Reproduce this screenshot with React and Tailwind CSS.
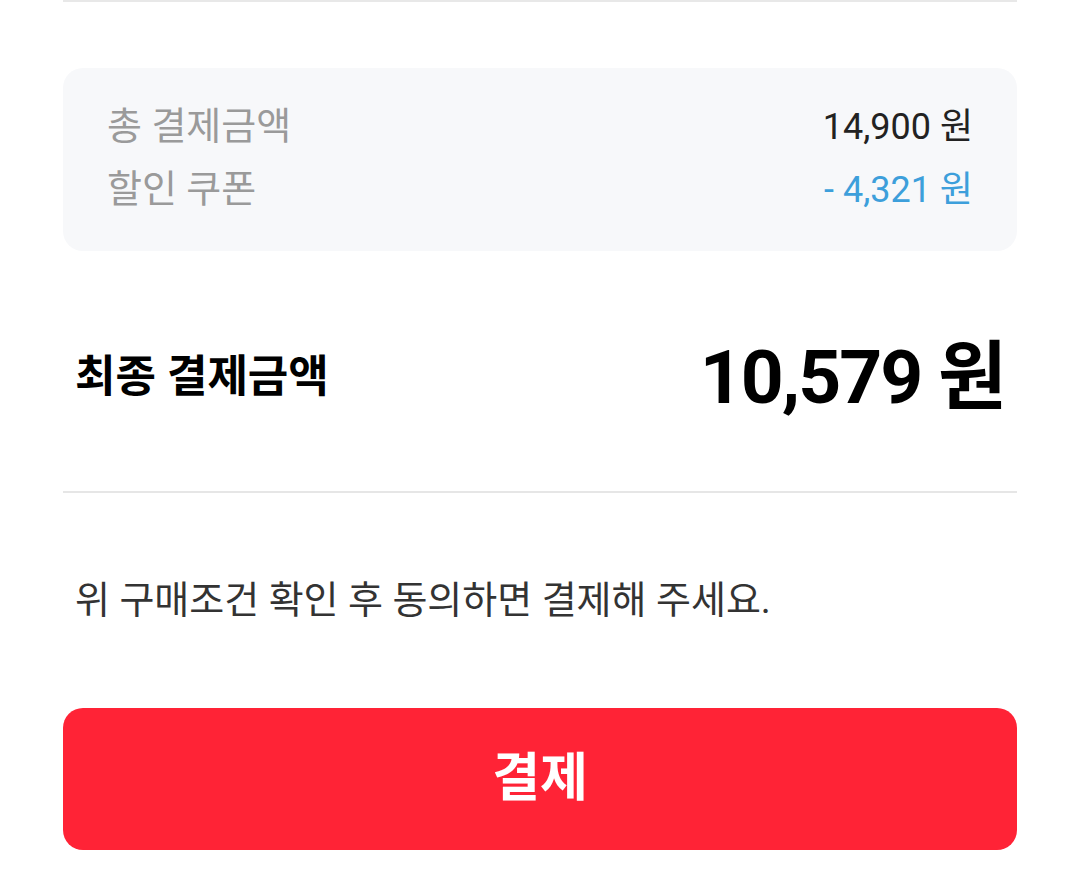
export default function App() {
  const font = { fontFamily: 'Roboto, "Noto Sans CJK KR", sans-serif' };

  return (
    <div className="w-[1080px] h-[869px] bg-white px-[63px] overflow-hidden" style={font}>
      <div className="h-[2px] bg-[#e8e8e8]" />

      {/* summary box */}
      <div className="mt-[66px] h-[183px] rounded-[20px] bg-[#f7f8fa] pl-[44px] pr-[44px] pt-[27px]">
        <div className="flex items-center justify-between h-[63px]">
          <span className="text-[38px] text-[#9a9a9a]">총 결제금액</span>
          <span className="text-[36px] text-[#222222]">14,900 원</span>
        </div>
        <div className="flex items-center justify-between h-[63px]">
          <span className="text-[38px] text-[#9a9a9a]">할인 쿠폰</span>
          <span className="text-[36px] text-[#3d9fdb]">- 4,321 원</span>
        </div>
      </div>

      {/* final amount */}
      <div className="flex items-center justify-between pl-[12px] pr-[12px] pt-[12px] h-[240px]">
        <span className="text-[44px] font-bold text-black">최종 결제금액</span>
        <span className="text-[75px] font-bold text-black tracking-[-2px]">10,579 원</span>
      </div>

      <div className="h-[2px] bg-[#e6e6e6]" />

      <div className="pl-[12px] h-[215px] flex items-center">
        <span className="text-[38px] text-[#333333]">위 구매조건 확인 후 동의하면 결제해 주세요.</span>
      </div>

      <button className="w-full h-[142px] rounded-[20px] bg-[#ff2336] flex items-center justify-center">
        <span className="text-[52px] font-bold text-white">결제</span>
      </button>
    </div>
  );
}
